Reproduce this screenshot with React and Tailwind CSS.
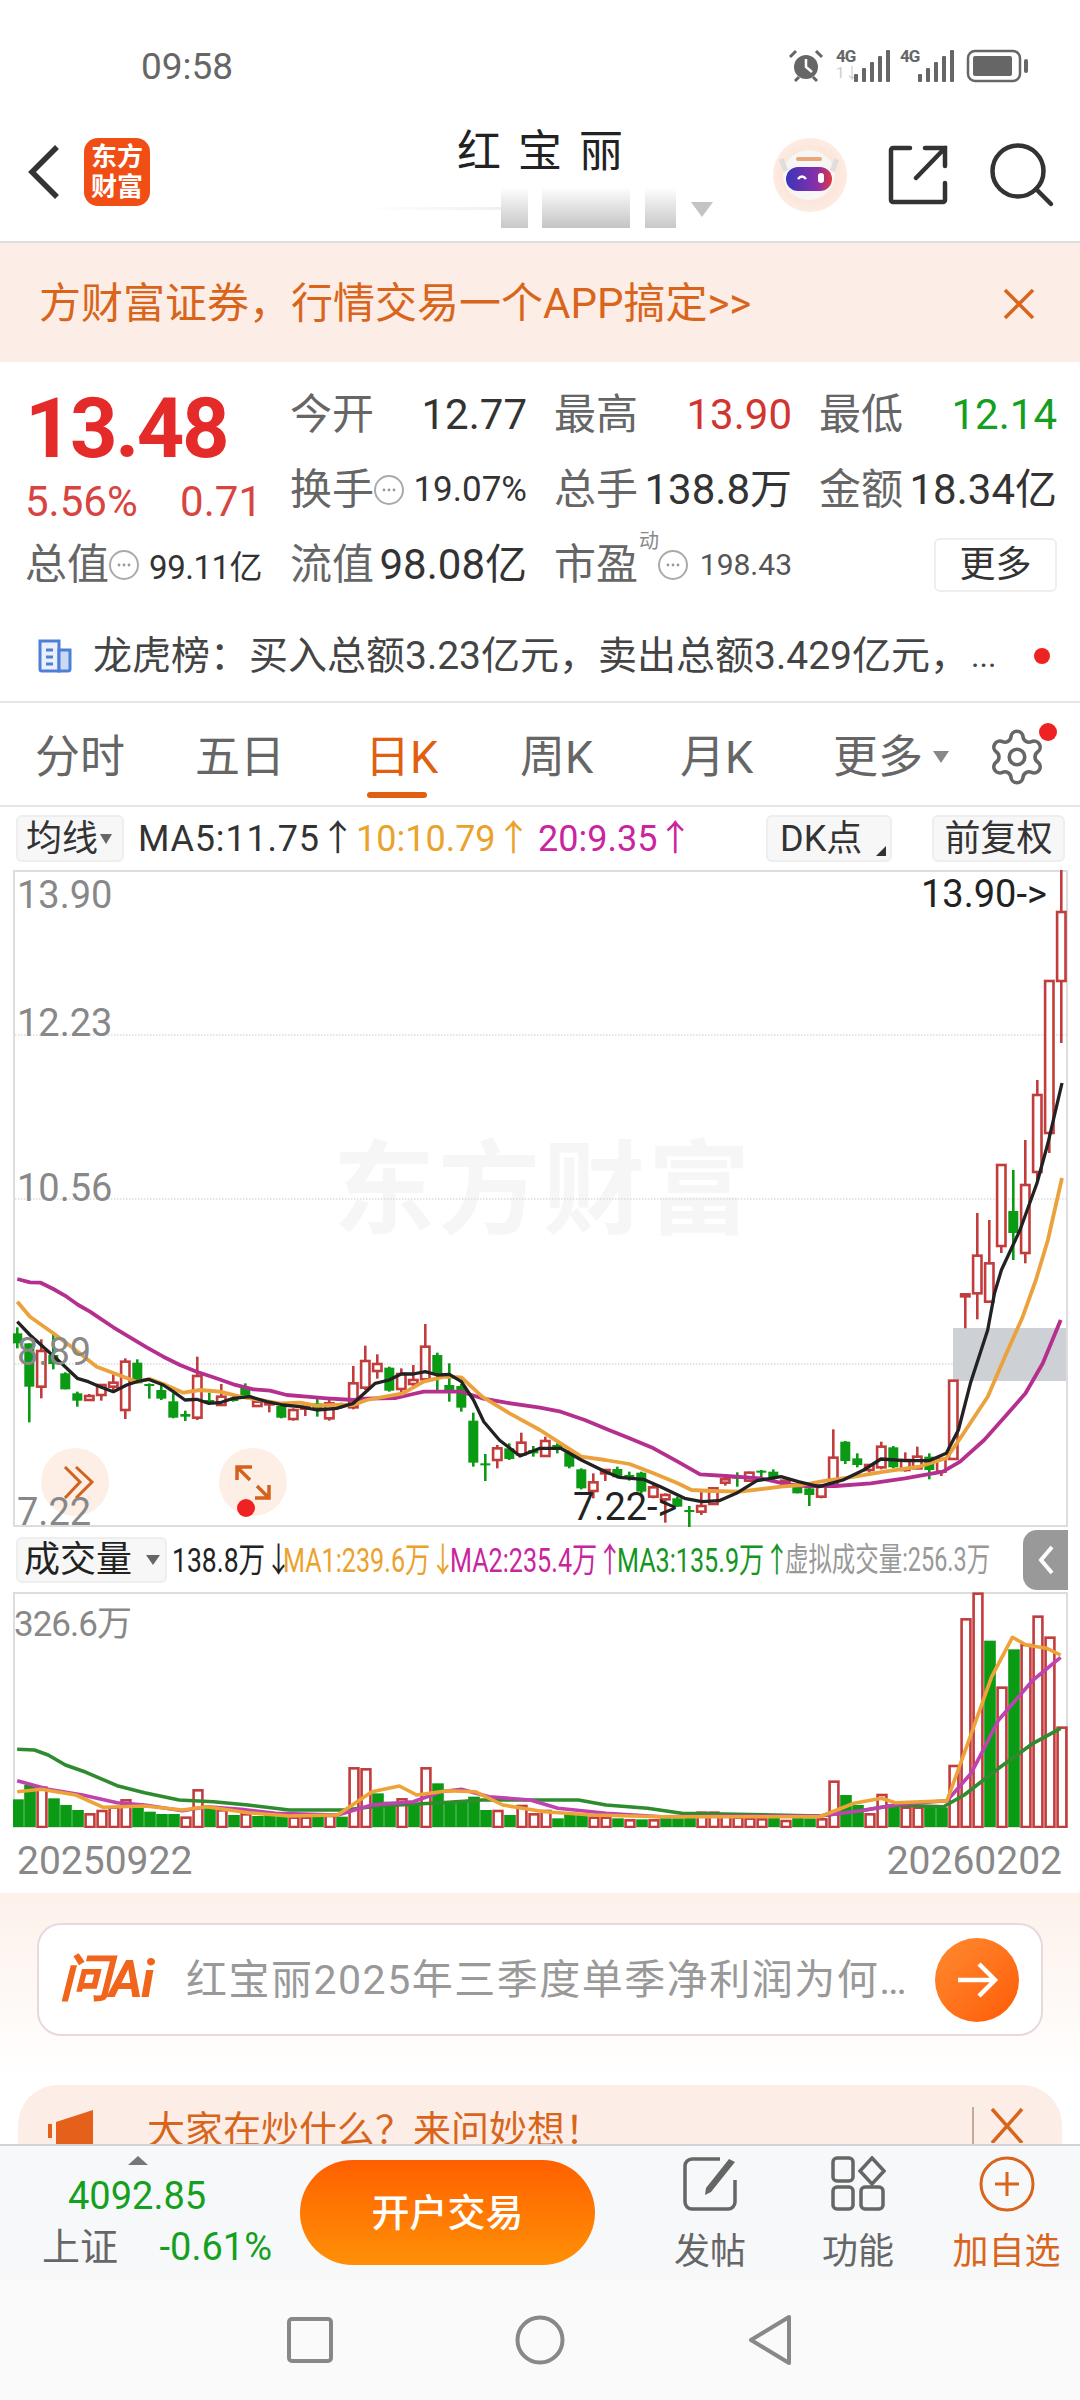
import React from "react";
import { Settings } from "lucide-react";

const FONT = { fontFamily: 'Roboto, "Noto Sans CJK SC", sans-serif' };
const RED = "#c23c3c";
const GREEN = "#0a9a14";
const z = (a, fx, fy) => a.map(([x, y]) => `${fx(x).toFixed(1)},${fy(y).toFixed(1)}`).join(" ");
const x8 = (x) => x / 3;
const x3 = (x) => x / 2.904;
const x4 = (x) => 540 + x / 2.904;
const y0 = (y) => 1240 + y / 3;
const x6 = (x) => x / 1.452;
const y6 = (y) => 1520 + y / 3;

// high, top, bottom, low, colour (y in 3x coordinates from y=1240)
const candles = [
  [262,280,310,325,"G"],[310,310,440,547,"G"],[298,333,440,475,"R"],[280,345,372,388,"G"],[397,400,448,448,"G"],
  [455,460,482,500,"G"],[462,468,480,480,"R"],[432,435,465,482,"R"],[403,428,440,455,"R"],[355,365,510,537,"R"],
  [358,368,430,430,"G"],[430,432,436,476,"G"],[435,450,476,480,"G"],[460,484,533,535,"G"],[512,522,530,543,"G"],
  [350,408,533,540,"R"],[458,480,490,492,"G"],[432,470,495,497,"R"],[470,475,483,485,"G"],[430,442,468,472,"G"],
  [480,485,498,498,"R"],[480,487,492,517,"R"],[497,498,533,535,"G"],[505,510,537,542,"R"],[498,500,505,528,"R"],
  [470,490,510,530,"G"],[480,490,535,542,"R"],[488,490,500,505,"G"],[378,430,502,508,"R"],[317,363,443,450,"R"],
  [343,372,393,416,"R"],[380,383,452,455,"G"],[385,402,447,462,"R"],[375,420,432,445,"R"],[252,320,418,420,"R"],
  [338,345,400,455,"G"],[370,435,450,485,"G"],[432,438,503,515,"G"],[518,542,668,680,"G"],[642,670,675,723,"G"],
  [615,625,660,685,"R"],[610,625,657,660,"G"],[578,608,643,650,"R"],[618,630,640,650,"G"],[590,603,648,650,"R"],
  [610,615,625,640,"G"],[625,638,680,685,"G"],[685,688,745,748,"G"],[700,727,753,775,"R"],[690,690,700,723,"R"],
  [680,687,712,715,"G"],[695,705,712,722,"G"],[695,698,755,760,"G"],[735,742,770,775,"R"],[760,765,778,848,"R"],
  [770,775,800,800,"G"],[798,810,815,865,"G"],[750,798,815,825,"R"],[745,745,792,795,"R"],[710,718,728,737,"R"],
  [697,710,715,740,"G"],[695,698,722,725,"R"],[690,692,697,720,"G"],[688,695,715,720,"G"],[720,722,730,738,"R"],
  [735,740,760,760,"G"],[730,745,765,798,"G"],[735,740,770,775,"R"],[568,653,735,740,"R"],[603,605,663,672,"G"],
  [640,655,675,682,"G"],[672,675,690,698,"R"],[605,620,682,688,"R"],[618,622,682,685,"G"],[637,660,690,695,"R"],
  [620,650,685,688,"R"],[640,650,690,718,"G"],[655,657,695,708,"R"],[420,422,657,657,"R"],[163,163,165,265,"R"],
  [-81,47,160,238,"R"],[-60,70,185,187,"R"],[-225,-225,18,39,"R"],[-210,-87,-21,60,"G"],[-300,-165,39,70,"R"],
  [-480,-435,-204,-180,"R"],[-777,-777,-321,-261,"R"],[-1110,-984,-777,-591,"R"],
];

const vols = [
  [838,"G"],[795,"G"],[800,"R"],[835,"G"],[855,"G"],[870,"G"],[880,"R"],[870,"R"],[860,"R"],[838,"R"],
  [860,"G"],[875,"G"],[882,"G"],[882,"G"],[890,"R"],[808,"R"],[865,"G"],[868,"R"],[885,"G"],[880,"R"],
  [888,"G"],[885,"G"],[885,"G"],[890,"R"],[890,"R"],[885,"G"],[885,"R"],[890,"G"],[742,"R"],[745,"R"],
  [820,"G"],[845,"G"],[835,"R"],[850,"G"],[742,"R"],[790,"G"],[845,"G"],[845,"G"],[830,"G"],[870,"G"],
  [870,"R"],[885,"G"],[855,"R"],[880,"R"],[870,"R"],[895,"G"],[880,"G"],[882,"G"],[890,"R"],[890,"R"],
  [895,"G"],[898,"R"],[898,"G"],[898,"R"],[895,"G"],[895,"G"],[890,"G"],[875,"R"],[875,"R"],[885,"R"],
  [890,"R"],[893,"R"],[895,"R"],[890,"G"],[900,"R"],[893,"G"],[895,"G"],[895,"R"],[782,"R"],[825,"G"],
  [855,"G"],[880,"R"],[822,"R"],[860,"G"],[860,"R"],[860,"R"],[858,"G"],[862,"G"],[735,"R"],[295,"R"],
  [218,"R"],[362,"G"],[500,"R"],[388,"G"],[372,"R"],[287,"R"],[350,"R"],[620,"R"],
];

const ma20 =
  z([[52,117],[90,127],[122,128],[160,147],[200,170],[235,195],[270,215],[300,235],[340,262],[390,292],[440,322],[490,350],[540,375],[590,395],[640,412],[700,433],[760,448],[810,452],[860,465],[920,470],[980,475],[1060,480],[1095,476]], x8, y0) + " " +
  z([[1150,474],[1200,462],[1230,455],[1300,455],[1340,455],[1400,475],[1470,488]], x3, y0) + " " +
  z([[0,503],[60,515],[130,540],[200,570],[260,595],[330,625],[400,665],[465,703],[540,708],[640,715],[720,733],[770,738],[860,738],[960,730],[1060,715],[1170,695],[1220,665],[1290,600],[1350,530],[1410,460],[1460,370],[1512,240]], x4, y0);
const ma10 =
  z([[52,185],[90,230],[160,280],[220,325],[290,380],[350,403],[410,425],[450,417],[490,432],[550,458],[600,450],[660,455],[720,470],[780,480],[840,490],[900,488],[950,497],[1010,495],[1060,495],[1100,480]], x8, y0) + " " +
  z([[1170,460],[1230,425],[1290,410],[1340,412],[1400,470],[1480,520]], x3, y0) + " " +
  z([[0,570],[60,610],[120,650],[190,660],[260,672],[330,700],[400,730],[440,750],[500,753],[580,755],[700,740],[760,735],[830,722],[900,712],[1000,695],[1100,680],[1180,655],[1230,580],[1300,470],[1350,350],[1400,235],[1440,120],[1475,0]], x4, y0) +
  " 1062,1178";
const ma5 =
  z([[52,245],[90,285],[140,330],[190,375],[232,415],[265,425],[300,440],[340,455],[380,435],[410,425],[445,418],[490,435],[520,455],[555,480],[590,478],[625,490],[660,488],[700,475],[750,470],[800,485],[850,495],[900,500],[950,510],[1010,505],[1060,490]], x8, y0) + " " +
  z([[1090,430],[1130,420],[1165,402],[1200,402],[1235,395],[1270,405],[1305,403],[1340,425],[1375,480],[1405,545],[1450,600],[1510,648]], x3, y0) + " " +
  z([[0,625],[60,625],[120,660],[190,695],[230,712],[300,718],[350,740],[420,775],[470,785],[520,782],[570,760],[630,722],[700,710],[750,725],[810,740],[880,720],[940,690],[990,657],[1060,662],[1130,662],[1180,640],[1215,570],[1250,430],[1300,270],[1320,160],[1340,90]], x4, y0) +
  " 1020,1230 1037,1183 1048,1143 1062,1083";

const vGreen = z([[25,688],[50,690],[70,705],[95,735],[125,757],[170,797],[210,818],[260,840],[310,845],[360,855],[420,870],[500,870],[550,858],[640,848],[700,840],[840,840],[880,855],[940,865],[990,880],[1050,882],[1190,888],[1240,875],[1300,855],[1370,860],[1400,825],[1450,745],[1500,670],[1540,625]], x6, y6);
const vMag = z([[25,782],[70,808],[120,825],[170,848],[210,855],[265,872],[300,860],[350,868],[400,880],[490,885],[540,855],[600,845],[640,815],[670,808],[710,830],[770,840],[810,865],[880,880],[960,890],[1060,888],[1190,888],[1250,872],[1310,852],[1375,842],[1410,760],[1450,600],[1500,480],[1540,412]], x6, y6);
const vOr = z([[25,815],[60,808],[110,825],[150,862],[210,858],[265,870],[300,860],[360,878],[420,888],[490,885],[540,815],[580,798],[605,825],[650,812],[690,815],[730,855],[790,875],[860,885],[960,890],[1190,890],[1240,850],[1280,835],[1300,848],[1375,842],[1400,700],[1440,470],[1470,352],[1490,375],[1520,385],[1540,405]], x6, y6);

function Dots() {
  return (
    <span className="inline-flex h-[30px] w-[30px] shrink-0 items-center justify-center rounded-full border-2 border-[#aaaaaa]">
      <svg width="16" height="4"><circle cx="3" cy="2" r="1.4" fill="#999" /><circle cx="8" cy="2" r="1.4" fill="#999" /><circle cx="13" cy="2" r="1.4" fill="#999" /></svg>
    </span>
  );
}

function Signal({ fade }) {
  return (
    <div className="relative h-[32px] w-[54px]">
      <span className="absolute left-0 top-[-3px] text-[17px] font-bold leading-[18px] tracking-[-1px] text-[#666666]">4G</span>
      {fade && <span className="absolute left-0 top-[15px] text-[15px] leading-[16px] text-[#cccccc]">1↓</span>}
      <svg className="absolute left-0 top-0" width="54" height="32">
        <rect x="18" y="24" width="4" height="8" rx="1" fill="#666" />
        <rect x="26" y="18" width="4" height="14" rx="1" fill="#666" />
        <rect x="34" y="12" width="4" height="20" rx="1" fill="#666" />
        <rect x="42" y="6" width="4" height="26" rx="1" fill="#666" />
        <rect x="50" y="0" width="4" height="32" rx="1" fill="#666" />
      </svg>
    </div>
  );
}

function StatusBar() {
  return (
    <div className="flex h-[110px] items-center pl-[141px] pr-[50px] pt-[22px] text-[#666666]">
      <span className="text-[37px] leading-none">09:58</span>
      <div className="ml-auto flex items-center gap-[10px]">
        <svg width="36" height="34" viewBox="0 0 36 34" className="mr-[2px]">
          <circle cx="18" cy="18" r="12" fill="#666" />
          <path d="M18 10v8l6 5" stroke="#fff" strokeWidth="2.5" fill="none" />
          <path d="M2 8l6-6M34 8l-6-6M7 32l4-4M29 32l-4-4" stroke="#666" strokeWidth="3" />
        </svg>
        <Signal fade />
        <Signal />
        <svg width="64" height="34" viewBox="0 0 64 34" className="ml-[2px]">
          <rect x="2" y="2" width="52" height="30" rx="7" fill="none" stroke="#666" strokeWidth="2.5" />
          <rect x="7" y="7" width="39" height="20" rx="2" fill="#666" />
          <rect x="58" y="10" width="4" height="14" rx="2" fill="#666" />
        </svg>
      </div>
    </div>
  );
}

function Header() {
  return (
    <div className="flex h-[133px] border-b-2 border-[#dddddd]">
      <div className="flex w-[308px] items-center pb-[8px] pl-[28px]">
        <svg width="32" height="56" viewBox="0 0 32 56" className="shrink-0">
          <path d="M29 3L4 28l25 25" fill="none" stroke="#333" strokeWidth="5.5" />
        </svg>
        <div className="ml-[24px] flex h-[68px] w-[66px] flex-col items-center justify-center rounded-[14px] bg-[#f04e14] text-[26px] font-bold leading-[30px] text-white">
          <span>东方</span>
          <span>财富</span>
        </div>
      </div>
      <div className="flex flex-1 flex-col items-center">
        <div className="ml-[3px] mt-[17px] text-[44px] leading-[50px] tracking-[3px] text-[#222222]">红 宝 丽</div>
        <div className="relative ml-[-6px] mt-[10px] h-[41px] w-[352px] shrink-0">
          <div className="absolute left-0 top-[20px] h-[3px] w-[140px] bg-gradient-to-r from-transparent to-[#f0f0f0]" />
          <div className="absolute left-[140px] top-0 h-[41px] w-[27px] bg-gradient-to-b from-white to-[#c8c8c8]" />
          <div className="absolute left-[181px] top-0 h-[41px] w-[88px] bg-gradient-to-b from-white to-[#c4c4c4]" />
          <div className="absolute left-[284px] top-0 h-[41px] w-[31px] bg-gradient-to-b from-white to-[#c8c8c8]" />
          <svg className="absolute left-[330px] top-[15px]" width="22" height="15"><path d="M0 0h22l-11 15z" fill="#c4c4c4" /></svg>
        </div>
      </div>
      <div className="flex w-[308px] items-center pb-[2px]">
        <svg width="76" height="76" viewBox="0 0 76 76" className="shrink-0">
          <defs>
            <radialGradient id="peach" cx="50%" cy="50%" r="50%"><stop offset="0%" stopColor="#fcd9c8" /><stop offset="100%" stopColor="#fdebe2" /></radialGradient>
            <linearGradient id="visor" x1="0" x2="1"><stop offset="0%" stopColor="#3b36b8" /><stop offset="70%" stopColor="#8b2fa8" /><stop offset="100%" stopColor="#e2383f" /></linearGradient>
          </defs>
          <circle cx="38" cy="38" r="37" fill="url(#peach)" />
          <ellipse cx="37" cy="38" rx="26" ry="25" fill="#f6f6f6" />
          <path d="M9 22l5 12M65 22l-5 12" stroke="#dedede" strokeWidth="5" />
          <rect x="24" y="20" width="26" height="4" rx="2" fill="#e8a878" />
          <rect x="14" y="30" width="46" height="24" rx="12" fill="url(#visor)" />
          <path d="M26 42q4-5 8 0" stroke="#fff" strokeWidth="2.5" fill="none" />
          <rect x="46" y="36" width="6" height="10" rx="3" fill="#fff" />
        </svg>
        <svg width="60" height="60" viewBox="0 0 60 60" className="ml-[40px] shrink-0">
          <path d="M22 3H5a2 2 0 0 0-2 2v50a2 2 0 0 0 2 2h50a2 2 0 0 0 2-2V38" fill="none" stroke="#333" strokeWidth="4.5" strokeLinecap="round" />
          <path d="M37 3h20v18M57 3L28 33" fill="none" stroke="#333" strokeWidth="4.5" strokeLinecap="round" />
        </svg>
        <svg width="66" height="66" viewBox="0 0 66 66" className="ml-[41px] shrink-0">
          <circle cx="29" cy="29" r="25.5" fill="none" stroke="#333" strokeWidth="4.5" />
          <path d="M47 47l15 15" stroke="#333" strokeWidth="4.5" strokeLinecap="round" />
        </svg>
      </div>
    </div>
  );
}

function PromoBanner() {
  return (
    <div className="flex h-[119px] items-center bg-[#fceee6] pl-[39px] pr-[45px] pt-[2px] text-[#d9651c]">
      <span className="text-[42px] leading-none">方财富证券，行情交易一个APP搞定&gt;&gt;</span>
      <svg width="32" height="32" className="ml-auto"><path d="M2 2l28 28M30 2L2 30" stroke="#d9651c" strokeWidth="3.5" /></svg>
    </div>
  );
}

function Stat({ label, value, cls = "text-[#333333]", extra, small, pr = "pr-[27px]" }) {
  return (
    <div className={`flex h-[75px] items-center justify-between ${pr}`}>
      <span className="flex items-center text-[#666666]">{label}{extra}</span>
      <span className={`${cls} ${small ? "text-[35px]" : ""}`}>{value}</span>
    </div>
  );
}

function Quote() {
  return (
    <div className="h-[341px] border-b-2 border-[#e5e5e5] pt-[15px] text-[42px] leading-none">
      <div className="grid grid-cols-[265px_264px_265px_238px] pl-[25px]">
        <div className="h-[75px] pt-[16px] text-[83px] font-bold leading-[72px] tracking-[-2.5px] text-[#e52a2a]">13.48</div>
        <Stat label="今开" value="12.77" />
        <Stat label="最高" value="13.90" cls="text-[#d2342f]" />
        <Stat label="最低" value="12.14" cls="text-[#14a01e]" pr="pr-0" />
        <div className="flex h-[75px] items-center pr-[28px] pt-[24px] text-[#d8443f]">
          <span>5.56%</span><span className="ml-auto">0.71</span>
        </div>
        <Stat label="换手" extra={<Dots />} value="19.07%" small />
        <Stat label="总手" value="138.8万" />
        <Stat label="金额" value="18.34亿" pr="pr-0" />
        <Stat label="总值" pr="pr-[28px]" extra={<Dots />} value={<span className="text-[33px] tracking-[-0.5px]">99.11亿</span>} />
        <Stat label="流值" value="98.08亿" />
        <div className="flex h-[75px] items-center pr-[27px] text-[#666666]">
          <span>市盈</span>
          <span className="relative top-[-24px] ml-[1px] text-[20px] text-[#888888]">动</span>
          <span className="ml-[-1px] flex"><Dots /></span>
          <span className="ml-auto text-[30px] text-[#555555]">198.43</span>
        </div>
        <div className="flex h-[75px] items-center pl-[115px]">
          <div className="flex h-[54px] w-[124px] items-center justify-center rounded-[6px] border-2 border-[#eeeeee] text-[36px] text-[#333333]">更多</div>
        </div>
      </div>
      <div className="mt-[24px] flex h-[60px] items-center pl-[37px] text-[39px] text-[#444444]">
        <svg width="36" height="36" viewBox="0 0 36 36" className="shrink-0">
          <path d="M3 3h19v30H5a2 2 0 0 1-2-2z" fill="#eaf0fb" stroke="#4e7fd6" strokeWidth="3" />
          <path d="M22 12h11v19a2 2 0 0 1-2 2h-9z" fill="#c9daf6" stroke="#4e7fd6" strokeWidth="3" />
          <path d="M9 12h7M9 19h7M9 26h7" stroke="#4e7fd6" strokeWidth="3" />
        </svg>
        <span className="ml-[20px] whitespace-nowrap">龙虎榜：买入总额3.23亿元，卖出总额3.429亿元，</span>
        <span className="ml-[2px] text-[32px]">...</span>
        <span className="ml-auto mr-[30px] h-[16px] w-[16px] rounded-full bg-[#ee2222]" />
      </div>
    </div>
  );
}

function Tabs() {
  const tabs = [["分时", "w-[160px]"], ["五日", "w-[170px]"], ["日K", "w-[155px]"], ["周K", "w-[160px]"], ["月K", "w-[153px]"]];
  return (
    <div className="flex h-[104px] items-center border-b-2 border-[#e5e5e5] pl-[35px] pt-[6px] text-[45px] leading-none text-[#666666]">
      {tabs.map(([t, w], i) => (
        <div key={t} className={`relative shrink-0 ${w} ${i === 2 ? "text-[#e0600f]" : ""}`}>
          {t}
          {i === 2 && <span className="absolute left-[2px] top-[57px] h-[6px] w-[60px] rounded-full bg-[#e0600f]" />}
        </div>
      ))}
      <span>更多</span>
      <svg width="16" height="12" className="ml-[10px]"><path d="M0 0h16L8 12z" fill="#888" /></svg>
      <div className="relative ml-[37px]">
        <Settings size={62} strokeWidth={1.4} color="#666666" />
        <span className="absolute right-[-9px] top-[-3px] h-[18px] w-[18px] rounded-full bg-[#ee2222]" />
      </div>
    </div>
  );
}

function MaRow() {
  return (
    <div className="flex h-[63px] items-center pl-[16px] text-[36px] leading-none">
      <div className="flex h-[47px] w-[108px] shrink-0 items-center rounded-[6px] border-2 border-[#eeeeee] bg-[#f7f7f7] pl-[8px] text-[#333333]">
        <span>均线</span>
        <svg width="12" height="12" className="ml-[2px]"><path d="M0 1h12L6 11z" fill="#666" /></svg>
      </div>
      <span className="ml-[14px] w-[218px] shrink-0 tracking-[0.8px] text-[#333333]">MA5:11.75↑</span>
      <span className="w-[182px] shrink-0 text-[#eba22c]">10:10.79↑</span>
      <span className="w-[152px] shrink-0 text-[#c9259f]">20:9.35↑</span>
      <div className="relative ml-[76px] flex h-[47px] w-[126px] shrink-0 items-center rounded-[6px] border-2 border-[#eeeeee] bg-[#f7f7f7] pl-[12px] text-[#333333]">
        DK点
        <svg width="10" height="10" className="absolute bottom-[4px] right-[4px]"><path d="M10 0v10H0z" fill="#333" /></svg>
      </div>
      <div className="ml-[40px] flex h-[47px] w-[133px] shrink-0 items-center justify-center rounded-[6px] border-2 border-[#eeeeee] bg-[#f7f7f7] text-[#333333]">前复权</div>
    </div>
  );
}

function PriceChart() {
  return (
    <div className="relative mx-[13px] h-[657px] w-[1055px] border-2 border-[#dddddd]">
      <div className="absolute left-[318px] top-[268px] whitespace-nowrap text-[102px] font-bold leading-none tracking-[3px] text-[#f6f6f6]">东方财富</div>
      <svg className="absolute left-[-2px] top-[-2px]" width="1055" height="657" viewBox="13 870 1055 657">
        <rect x="953" y="1328" width="113" height="53" fill="#cdd0d5" />
        {[1035, 1199, 1364].map((y) => (
          <line key={y} x1="15" x2={y === 1364 ? 953 : 1066} y1={y} y2={y} stroke="#dcdcdc" strokeWidth="1.5" strokeDasharray="1.5 1.5" />
        ))}
        {candles.map(([h, t, b, l, c], i) => {
          const x = 17.3 + 12 * i;
          const col = c === "R" ? RED : GREEN;
          return (
            <g key={i}>
              <line x1={x} x2={x} y1={y0(h)} y2={y0(l)} stroke={col} strokeWidth="2.6" />
              {c === "R" ? (
                <rect x={x - 4.2} y={y0(t)} width="8.4" height={Math.max(2, (b - t) / 3)} fill="#fff" stroke={col} strokeWidth="2.6" />
              ) : (
                <rect x={x - 5} y={y0(t)} width="10" height={Math.max(2, (b - t) / 3)} fill={col} />
              )}
            </g>
          );
        })}
        <polyline points={ma20} fill="none" stroke="#b5308e" strokeWidth="3.8" strokeLinejoin="round" />
        <polyline points={ma10} fill="none" stroke="#eba23c" strokeWidth="3.8" strokeLinejoin="round" />
        <polyline points={ma5} fill="none" stroke="#222222" strokeWidth="3.3" strokeLinejoin="round" />
        <circle cx="75" cy="1482" r="34" fill="#fdeee6" />
        <circle cx="253" cy="1482" r="34" fill="#fdeee6" />
        <path d="M65 1467l15 15-15 16M76 1467l16 15-16 16" fill="none" stroke="#d4621c" strokeWidth="3" />
        <path d="M252 1467h-15v13M237 1467l13 13M255 1498h14v-13M269 1498l-12-12" fill="none" stroke="#d4621c" strokeWidth="3.5" />
        <circle cx="246" cy="1508" r="9" fill="#ee2222" />
      </svg>
      <span className="absolute left-[2px] top-[1px] text-[38px] leading-[44px] text-[#888888]">13.90</span>
      <span className="absolute left-[2px] top-[129px] text-[38px] leading-[44px] text-[#888888]">12.23</span>
      <span className="absolute left-[2px] top-[294px] text-[38px] leading-[44px] text-[#888888]">10.56</span>
      <span className="absolute left-[2px] top-[458px] text-[38px] leading-[44px] text-[#888888]">8.89</span>
      <span className="absolute left-[2px] top-[618px] text-[38px] leading-[44px] text-[#888888]">7.22</span>
      <span className="absolute left-[906px] top-[0px] text-[38px] leading-[44px] text-[#222222]">13.90-&gt;</span>
      <span className="absolute left-[558px] top-[613px] text-[38px] leading-[44px] text-[#222222]">7.22-&gt;</span>
    </div>
  );
}

function VolRow() {
  return (
    <div className="flex h-[65px] items-center pl-[16px] text-[34px] leading-none">
      <div className="flex h-[46px] w-[151px] shrink-0 items-center rounded-[6px] border-2 border-[#eeeeee] bg-[#f7f7f7] pl-[6px] text-[36px] text-[#222222]">
        <span>成交量</span>
        <svg width="14" height="12" className="ml-[14px]"><path d="M0 1h14L7 11z" fill="#666" /></svg>
      </div>
      <span className="ml-[5px] w-[111px] shrink-0 origin-left scale-x-[0.78] whitespace-nowrap text-[#222222]">138.8万↓</span>
      <span className="w-[167px] shrink-0 origin-left scale-x-[0.74] whitespace-nowrap text-[#eba22c]">MA1:239.6万↓</span>
      <span className="w-[167px] shrink-0 origin-left scale-x-[0.74] whitespace-nowrap text-[#c9259f]">MA2:235.4万↑</span>
      <span className="w-[168px] shrink-0 origin-left scale-x-[0.74] whitespace-nowrap text-[#14961e]">MA3:135.9万↑</span>
      <span className="w-[238px] shrink-0 origin-left scale-x-[0.71] whitespace-nowrap text-[33px] text-[#999999]">虚拟成交量:256.3万</span>
      <div className="flex h-[60px] w-[45px] shrink-0 items-center justify-center rounded-l-[14px] bg-[#999999]">
        <svg width="18" height="32"><path d="M15 3L4 16l11 13" fill="none" stroke="#fff" strokeWidth="4" /></svg>
      </div>
    </div>
  );
}

function VolChart() {
  return (
    <div className="relative mx-[13px] h-[236px] w-[1055px] border-2 border-[#dddddd]">
      <svg className="absolute left-[-2px] top-[-2px]" width="1055" height="236" viewBox="13 1592 1055 236">
        {vols.map(([t, c], i) => {
          const x = 18 + 12 * i;
          return c === "R" ? (
            <rect key={i} x={x - 4.4} y={y6(t) + 1} width="8.8" height={1827 - y6(t) - 1} fill="#fff" stroke={RED} strokeWidth="2.6" />
          ) : (
            <rect key={i} x={x - 5.8} y={y6(t)} width="11.6" height={1827 - y6(t)} fill={GREEN} />
          );
        })}
        <polyline points={vGreen} fill="none" stroke="#2e8b2e" strokeWidth="3.6" strokeLinejoin="round" />
        <polyline points={vMag} fill="none" stroke="#c042b0" strokeWidth="3.6" strokeLinejoin="round" />
        <polyline points={vOr} fill="none" stroke="#eea338" strokeWidth="3.6" strokeLinejoin="round" />
      </svg>
      <span className="absolute left-[-1px] top-[9px] text-[35px] leading-[44px] tracking-[-1px] text-[#888888]">326.6万</span>
    </div>
  );
}

function DateRow() {
  return (
    <div className="flex h-[65px] items-center justify-between pl-[17px] pr-[18px] pt-[2px] text-[39px] leading-none text-[#888888]">
      <span>20250922</span>
      <span>20260202</span>
    </div>
  );
}

function AskBox() {
  return (
    <div className="h-[251px] bg-gradient-to-b from-[#fdf1ea] to-white to-[75%] px-[18px] pt-[30px]">
      <div className="mx-[19px] flex h-[113px] items-center rounded-[24px] border-2 border-[#e8d9dc] bg-white pl-[20px] pr-[22px]">
        <span className="w-[100px] shrink-0 whitespace-nowrap text-[52px] font-bold italic leading-none tracking-[-2px] text-[#f0641c]">问Ai</span>
        <span className="ml-[27px] whitespace-nowrap pt-[2px] text-[41px] leading-none tracking-[1.5px] text-[#999999]">红宝丽2025年三季度单季净利润为何…</span>
        <div className="ml-auto flex h-[84px] w-[84px] shrink-0 items-center justify-center rounded-full bg-gradient-to-br from-[#ff8a2e] to-[#ff5a00]">
          <svg width="44" height="44" viewBox="0 0 44 44"><path d="M3 22h36M24 6l16 16-16 16" fill="none" stroke="#fff" strokeWidth="4.5" /></svg>
        </div>
      </div>
      <div className="mt-[49px] flex h-[59px] items-start overflow-hidden rounded-t-[40px] bg-[#fceee6] pl-[30px] pr-[38px] pt-[22px] text-[#d9651c]">
        <svg width="46" height="38" viewBox="0 0 46 38" className="mt-[3px] shrink-0"><path d="M0 14h4v14H0zM8 12l37-12v38H8z" fill="#e5601a" /></svg>
        <span className="ml-[53px] whitespace-nowrap text-[38px] leading-[46px]">大家在炒什么？来问妙想！</span>
        <span className="ml-auto h-[37px] w-[2px] bg-[#c9a994]" />
        <svg width="34" height="36" className="ml-[16px] shrink-0"><path d="M2 2l30 34M32 2L2 36" stroke="#d9651c" strokeWidth="3.5" /></svg>
      </div>
    </div>
  );
}

function BottomBar() {
  return (
    <div className="flex h-[136px] items-start border-t-2 border-[#cfd3d8] bg-[#f7f8fa] leading-none">
      <div className="w-[300px] shrink-0 pl-[42px] pt-[10px]">
        <svg width="20" height="9" className="ml-[86px] block"><path d="M10 0l10 9H0z" fill="#777" /></svg>
        <div className="mt-[12px] pl-[26px] text-[38px] text-[#14a01e]">4092.85</div>
        <div className="mt-[13px] flex items-center pr-[28px] text-[38px]">
          <span className="text-[#666666]">上证</span>
          <span className="ml-auto text-[#14a01e]">-0.61%</span>
        </div>
      </div>
      <div className="mt-[14px] flex h-[105px] w-[295px] shrink-0 items-center justify-center rounded-full bg-gradient-to-b from-[#ff5f00] to-[#ff8f06] text-[38px] font-medium text-white">开户交易</div>
      <div className="ml-[80px] flex w-[70px] shrink-0 flex-col items-center pt-[10px] text-[36px] text-[#666666]">
        <svg width="56" height="56" viewBox="0 0 56 56">
          <path d="M38 3H10a7 7 0 0 0-7 7v36a7 7 0 0 0 7 7h36a7 7 0 0 0 7-7V24" fill="none" stroke="#666" strokeWidth="3.5" />
          <path d="M47 3l6 3-24 30-6 3 1-7z" fill="#666" />
        </svg>
        <span className="mt-[22px] whitespace-nowrap">发帖</span>
      </div>
      <div className="ml-[78px] flex w-[70px] shrink-0 flex-col items-center pt-[10px] text-[36px] text-[#666666]">
        <svg width="56" height="56" viewBox="0 0 56 56" fill="none" stroke="#666" strokeWidth="3.5">
          <rect x="3" y="2" width="20" height="23" rx="4" />
          <path d="M42 2l12 13-12 13-12-13z" />
          <rect x="3" y="31" width="20" height="22" rx="4" />
          <rect x="31" y="31" width="22" height="22" rx="4" />
        </svg>
        <span className="mt-[22px] whitespace-nowrap">功能</span>
      </div>
      <div className="ml-[60px] flex w-[107px] shrink-0 flex-col items-center pt-[10px] text-[36px] text-[#d9651c]">
        <svg width="56" height="56" viewBox="0 0 56 56" fill="none" stroke="#d9651c" strokeWidth="3">
          <circle cx="28" cy="28" r="26" />
          <path d="M28 16v24M16 28h24" />
        </svg>
        <span className="mt-[22px] whitespace-nowrap">加自选</span>
      </div>
    </div>
  );
}

function NavBar() {
  return (
    <div className="flex h-[120px] items-center justify-center gap-[182px] bg-[#fafafa]">
      <svg width="46" height="46"><rect x="2" y="2" width="42" height="42" rx="3" fill="none" stroke="#888" strokeWidth="4" /></svg>
      <svg width="50" height="50"><circle cx="25" cy="25" r="22.5" fill="none" stroke="#888" strokeWidth="4" /></svg>
      <svg width="46" height="52" viewBox="0 0 46 52"><path d="M42 3v46L4 26z" fill="none" stroke="#888" strokeWidth="4" strokeLinejoin="round" /></svg>
    </div>
  );
}

export default function App() {
  return (
    <div className="h-[2400px] w-[1080px] overflow-hidden bg-white" style={FONT}>
      <StatusBar />
      <Header />
      <PromoBanner />
      <Quote />
      <Tabs />
      <MaRow />
      <PriceChart />
      <VolRow />
      <VolChart />
      <DateRow />
      <AskBox />
      <BottomBar />
      <NavBar />
    </div>
  );
}
